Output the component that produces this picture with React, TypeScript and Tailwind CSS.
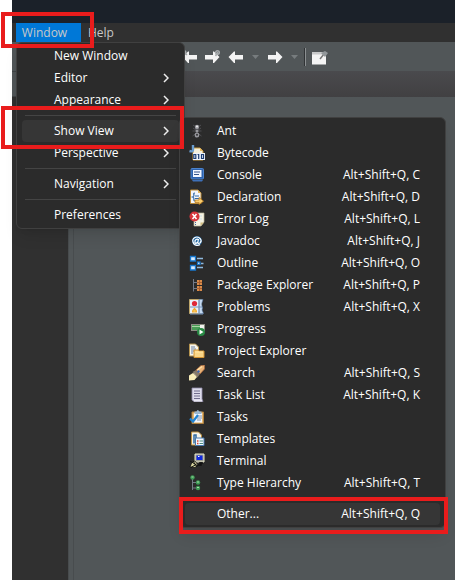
import React from "react";

type Item = { name: string; key?: string; icon?: React.ReactNode };

const W = "#f4f4f4";

function Icon({ children }: { children: React.ReactNode }) {
  return (
    <svg viewBox="0 0 16 16" className="h-4 w-4 shrink-0" aria-hidden="true">
      {children}
    </svg>
  );
}

const ant = (
  <Icon>
    <path d="M4 2l3 2M12 2L9 4M3.500 8h9M4 5l3 2M12 5L9 7M3.500 13l4-3M12.500 13l-4-3" stroke="#57575c" strokeWidth=".8" fill="none" />
    <circle cx="8" cy="4" r="2.200" fill="#97979d" />
    <circle cx="8" cy="8" r="1.700" fill="#77777d" />
    <ellipse cx="8" cy="12" rx="2.300" ry="2.600" fill="#97979d" />
    <circle cx="8" cy="3.600" r="1" fill="#efefef" />
    <circle cx="8" cy="8" r=".7" fill="#c9c9c9" />
    <circle cx="8" cy="11.800" r="1.100" fill="#3a3a3c" />
  </Icon>
);
const bytecode = (
  <Icon>
    <path d="M4 3h7l3 3v9H4z" fill="#f5f0dc" stroke="#c5973d" />
    <path d="M11 3v3h3" fill="#e5b964" />
    <path d="M4 0v5q0 2-3.500 1" stroke="#6a9dd0" strokeWidth="2.400" fill="none" />
    <path d="M4 8h12v7H4z" fill="#eef3fb" />
    <path d="M4.800 9.500h2v4h-2zM8.500 9.500h1.200v4.500M12.500 9.500h2v4h-2z" stroke="#1d3d73" strokeWidth="1.200" fill="none" />
  </Icon>
);
const consoleIcon = (
  <Icon>
    <rect x="2" y="1.500" width="12.500" height="10.500" rx="1" fill="#2d62ad" stroke="#4c83cc" />
    <rect x="4" y="3" width="8.500" height="7" fill="#f3f7ff" />
    <path d="M5 5h6M5 7.500h5" stroke="#35558b" />
    <path d="M3 13h11l-1 1.500H4z" fill="#3e70b8" />
  </Icon>
);
const declaration = (
  <Icon>
    <path d="M1.500 1h7.500l3 3v10.500H1.500z" fill="#f3f6fb" stroke="#b98a38" />
    <path d="M9 1v3h3" fill="#e0b664" />
    <path d="M6 4q-2 0-1 2 0 1.500-1.500 2Q5 8.500 5 10q-.5 2 1 2M6 7h4M6 9.500h4" stroke="#326aa6" strokeWidth="1.200" fill="none" />
    <path d="M6 11h4V8.500l4.500 3.700L10 15.500v-2H6z" fill="#f8cd70" stroke="#b87b20" strokeWidth=".8" />
  </Icon>
);
const errorLog = (
  <Icon>
    <path d="M5 2h10v9l-3 4H5V6z" fill="#f5f3e3" stroke="#b9b49a" strokeWidth=".7" />
    <path d="M11.500 15v-3.500h3.500" fill="#cfbb80" />
    <path d="M6 11.500h1M6 13.500h1" stroke="#4469a3" />
    <path d="M9 5h4M9 8h4" stroke="#cbdce9" />
    <circle cx="5.500" cy="5.500" r="5" fill="#d5363c" />
    <path d="M3.500 3l4 5M7.500 3l-4 5" stroke="#fff" strokeWidth="1.500" />
  </Icon>
);
const javadoc = (
  <Icon>
    <circle cx="8" cy="8" r="5" fill="#2467a0" />
    <path d="M9.500 6L8.800 9.500Q9 11 11 10q2-2 .5-4Q9 3 6 4.500T4 9t3 3.200q2 .5 4-.6M9.300 7Q8.500 5.500 7 6.500T6 9.500t3-.5" stroke="#fff" strokeWidth="1.200" fill="none" />
  </Icon>
);
const outline = (
  <Icon>
    <path d="M1.500 1.500h5V6h-5zM1.500 10.500h5V15h-5z" fill="#d6ebff" stroke="#1676cc" strokeWidth="1.300" />
    <path d="M8 3.500h6M8 12.500h6M12 8.500h2.500" stroke="#8fb9dd" strokeWidth="1.500" />
    <rect x="8.500" y="7" width="2.500" height="2.500" fill="#fff" stroke="#1676cc" strokeWidth="1.300" />
  </Icon>
);
const packageExplorer = (
  <Icon>
    <path d="M4.500 2v12.500M4.500 5.500H8M4.500 11.500H8" stroke="#737b89" fill="none" />
    <path d="M8 3h5v5H8zM8 9h5v5H8z" fill="#a75e2e" />
    <path d="M8 3h2v2H8zM11 3h2v2h-2zM8 6h2v2H8zM11 6h2v2h-2zM8 9h2v2H8zM11 9h2v2h-2zM8 12h2v2H8zM11 12h2v2h-2z" fill="#d98b4a" />
  </Icon>
);
const problems = (
  <Icon>
    <path d="M.500 .500h12v14H.500z" fill="#e9f1fb" stroke="#bda56a" />
    <path d="M10 .500h4L12.500 5l1 4-.5 2 1.500 3.500H10z" fill="#c5d9f0" stroke="#5b7da9" strokeWidth=".6" />
    <path d="M1 8h12M10 1v14M1 15h13" stroke="#7895ba" />
    <circle cx="5.500" cy="4.500" r="2.600" fill="#df2939" />
    <path d="M3 13.500v-2l2.500-3 2.500 3v2z" fill="#f2aa31" />
    <path d="M4.500 12h2" stroke="#ffe178" />
  </Icon>
);
const progress = (
  <Icon>
    <rect x="2.500" y="3.500" width="13" height="6" fill="#f1f3ee" stroke="#8c8b83" />
    <rect x="3" y="4" width="8" height="5" fill="#4a9c57" />
    <path d="M3 5.500h8" stroke="#a8d8a4" />
    <circle cx="12" cy="11" r="4" fill="#278943" />
    <path d="M10.500 8.500l4 2.500-4 2.500z" fill="#fff" />
  </Icon>
);
const project = (
  <Icon>
    <path d="M.500 1h6l3 3v9h-9z" fill="#f7f5ec" stroke="#b69550" />
    <path d="M2 4h4M2 6h5M2 8h3M2 10h2" stroke="#6680a4" />
    <path d="M5 7h4l1 1h5v6.500H5z" fill="#f8d486" stroke="#d29233" />
    <path d="M6 9h8" stroke="#ffe7a5" />
  </Icon>
);
const search = (
  <Icon>
    <path d="M0 10.500L4 8l4 4-2.500 3L0 15.500z" fill="#f8edb9" />
    <path d="M3.500 7L7 5l4 4-2.500 3.500z" fill="#85796a" />
    <path d="M7 5l5-4.500 3.500-.500v4L11 9z" fill="#e9b276" stroke="#a8683f" strokeWidth=".8" />
    <path d="M8.500 5L13 1.500" stroke="#ffe2a6" strokeWidth="1.500" />
    <path d="M4.500 8l3 3.500" stroke="#c5bba2" />
    <circle cx="9.500" cy="6.500" r="1.200" fill="#3669bb" />
  </Icon>
);
const taskList = (
  <Icon>
    <path d="M3 1h10v11l1 2.500H5L3 13z" fill="#dedcec" stroke="#918ca9" strokeWidth=".8" />
    <path d="M5 4h6M5 6.500h6M5 9h6M5 11.500h6" stroke="#716d8d" />
    <path d="M5 14h8" stroke="#f5f4fb" />
  </Icon>
);
const tasks = (
  <Icon>
    <path d="M3 3h11.500v11.500H3z" fill="#e3b66f" stroke="#ad7f3e" />
    <path d="M5 4h8v9.500H5z" fill="#eef5ff" />
    <path d="M5.500 5V2.500h2q1-3 3 0h2V5z" fill="#9bb7d0" />
    <path d="M9 7h4M8 9h5M8 11h4" stroke="#8496b0" />
    <path d="M1 9.500l3 3 5-6.500" stroke="#2184d3" strokeWidth="2.200" fill="none" />
  </Icon>
);
const templates = (
  <Icon>
    <path d="M2.500 1h7l3 3v10h-10z" fill="#f5f3e9" stroke="#bd9142" />
    <path d="M5 3.500v9M5 4h2v3" stroke="#326ba0" strokeWidth="1.500" fill="none" />
    <path d="M6.500 7h8.500v7.500H6.500z" fill="#f3f8ff" stroke="#4679ae" />
    <path d="M8 10h1.500M8 12.500h1.500" stroke="#d44134" strokeWidth="1.300" />
    <path d="M10.500 10H14M10.500 12.500H14" stroke="#4d8f82" />
  </Icon>
);
const terminal = (
  <Icon>
    <path d="M6 1h9v8H6z" fill="#9c9c94" stroke="#e9e9cb" />
    <path d="M7.500 2.500h6v4.500h-6z" fill="#1029df" />
    <path d="M9 3.500h1.500" stroke="#fff" />
    <path d="M10 10h4M12 9v3H9" stroke="#111" strokeWidth="1.500" fill="none" />
    <path d="M1 14l2-5 3-1 3 4-3 2.500z" fill="#d8d69e" stroke="#111" strokeWidth=".8" />
    <path d="M1 8l8 5M4 8l4 6M2 14.500l5-3" stroke="#111" />
  </Icon>
);
const hierarchy = (
  <Icon>
    <path d="M3.500 4v11M3.500 7.500H8M3.500 13H8" stroke="#747b87" fill="none" />
    <g fill="#3d9a55">
      <circle cx="3.500" cy="2.500" r="2.200" />
      <circle cx="9" cy="7.500" r="2.200" />
      <circle cx="9" cy="13" r="2.200" />
    </g>
    <path d="M2.500 2h2M8 7h2M8 12.500h2" stroke="#a8dba7" />
  </Icon>
);

const views: Item[] = [
  { name: "Ant", icon: ant },
  { name: "Bytecode", icon: bytecode },
  { name: "Console", key: "C", icon: consoleIcon },
  { name: "Declaration", key: "D", icon: declaration },
  { name: "Error Log", key: "L", icon: errorLog },
  { name: "Javadoc", key: "J", icon: javadoc },
  { name: "Outline", key: "O", icon: outline },
  { name: "Package Explorer", key: "P", icon: packageExplorer },
  { name: "Problems", key: "X", icon: problems },
  { name: "Progress", icon: progress },
  { name: "Project Explorer", icon: project },
  { name: "Search", key: "S", icon: search },
  { name: "Task List", key: "K", icon: taskList },
  { name: "Tasks", icon: tasks },
  { name: "Templates", icon: templates },
  { name: "Terminal", icon: terminal },
  { name: "Type Hierarchy", key: "T", icon: hierarchy },
];

function Separator() {
  return <div role="separator" className="mx-[3px] my-1 h-px bg-[#444444]" />;
}

function MenuRow({ name, sub, active }: { name: string; sub?: boolean; active?: boolean }) {
  return (
    <button
      role="menuitem"
      className={`flex h-[22px] w-full items-center justify-between rounded pr-2.5 pl-8 text-left ${active ? "bg-[#363636]" : ""}`}
    >
      <span>{name}</span>
      {sub && (
        <svg viewBox="0 0 6 10" className="h-2.5 w-1.5" fill="none" stroke="#eeeeee" strokeWidth="1.5" aria-hidden="true">
          <path d="M1 1l4 4-4 4" />
        </svg>
      )}
    </button>
  );
}

function ViewRow({ name, keyName, icon, active }: { name: string; keyName?: string; icon?: React.ReactNode; active?: boolean }) {
  return (
    <button
      role="menuitem"
      className={`flex h-[22px] w-full items-center rounded pr-5 pl-1 text-left ${active ? "bg-[#363636]" : ""}`}
    >
      <span className="mr-3 flex h-4 w-4 shrink-0">{icon}</span>
      <span>{name}</span>
      {keyName && <span className="ml-auto">Alt+Shift+Q, {keyName}</span>}
    </button>
  );
}

function Arrow({ back, pin, label }: { back?: boolean; pin?: boolean; label: string }) {
  return (
    <button aria-label={label} className="h-4 w-4">
      <svg viewBox="0 0 16 16" className="h-4 w-4" aria-hidden="true">
        <g transform={back ? "matrix(-1 0 0 1 16 0)" : undefined}>
          <path d="M1 6h8V2.500h1l5.500 5.500-5.500 6H9v-3.500H1z" fill={W} />
        </g>
        {pin && (
          <g fill="none" stroke="#a7abad" strokeWidth="1.500">
            <path d={back ? "M1 2l4 4" : "M11.500 7l2.500-4"} />
            <circle cx={back ? 2 : 13.5} cy="3.500" r="1.800" />
          </g>
        )}
      </svg>
    </button>
  );
}

function Caret({ label }: { label: string }) {
  return (
    <button aria-label={label} className="h-4 w-[7px]">
      <svg viewBox="0 0 7 16" className="h-4 w-[7px]" aria-hidden="true">
        <path d="M0 6h7l-3.500 4z" fill="#777c7e" />
      </svg>
    </button>
  );
}

function Callout({ place }: { place: string }) {
  return <div className={`pointer-events-none absolute z-30 border-4 border-[#e91c1c] ${place}`} />;
}

export default function App() {
  return (
    <div className="relative flex min-h-screen flex-col overflow-hidden bg-white pl-3 font-['Open_Sans','Noto_Sans',sans-serif] text-xs text-white">
      <header className="h-[23px] bg-[#1b2129]" />
      <nav aria-label="Main menu" className="flex h-[19px] bg-[#303030] pl-1 text-[#c8c8c8]">
        <button aria-expanded="true" className="w-[65px] bg-[#0078d7] pr-2 text-center">Window</button>
        <button className="px-[7px]">Help</button>
      </nav>
      <div className="flex h-[29px] items-center gap-2 bg-[#515658] pl-[170px]">
        <div className="flex gap-1.5">
          <Arrow back pin label="Previous edit location" />
          <Arrow pin label="Next edit location" />
        </div>
        <Arrow back label="Back" />
        <Caret label="Back history" />
        <Arrow label="Forward" />
        <div className="flex items-center gap-1.5">
          <Caret label="Forward history" />
          <span className="h-[18px] w-[2px] border-l border-[#303335] bg-[#8b8f91]" />
          <button aria-label="Pin editor" className="h-4 w-4">
            <svg viewBox="0 0 16 16" className="h-4 w-4" aria-hidden="true">
              <path d="M0 3h14v12.500H0z" fill={W} />
              <path d="M0 3h14v2.500H0z" fill="#c8c9ca" />
              <path d="M8 10l4-5" stroke="#777" strokeWidth="1.500" />
              <path d="M9 4l4 4 3-4-3-2z" fill="#92979a" />
            </svg>
          </button>
        </div>
      </div>
      <div className="flex h-[26px] bg-linear-to-b from-[#4a4a4d] to-[#414042]">
        <div className="w-14 border-y border-[#404446] bg-[#515658]" />
      </div>
      <main className="flex flex-1">
        <aside className="w-14 bg-[#303030]" />
        <div className="w-[6px] border-x border-[#484c4e] bg-[#515658]" />
        <section className="flex-1 bg-[#515658]" />
      </main>

      <div role="menu" aria-label="Window" className="absolute top-[42px] left-4 z-10 w-[169px] rounded-md border border-[#404040] bg-[#2b2b2b] px-[5px] py-0.5 shadow-lg">
        <MenuRow name="New Window" />
        <MenuRow name="Editor" sub />
        <MenuRow name="Appearance" sub />
        <Separator />
        <MenuRow name="Show View" sub active />
        <MenuRow name="Perspective" sub />
        <Separator />
        <MenuRow name="Navigation" sub />
        <Separator />
        <MenuRow name="Preferences" />
      </div>

      <div role="menu" aria-label="Show View" className="absolute top-[117px] left-[179px] z-20 w-[267px] rounded-md border border-[#404040] bg-[#2b2b2b] px-[5px] py-0.5 shadow-lg">
        {views.map((v) => (
          <ViewRow key={v.name} name={v.name} keyName={v.key} icon={v.icon} />
        ))}
        <Separator />
        <ViewRow name="Other..." keyName="Q" active />
      </div>

      <Callout place="top-3 left-px h-9 w-[93px]" />
      <Callout place="top-[106px] left-px h-[43px] w-[183px]" />
      <Callout place="top-[497px] left-[179px] h-[37px] w-[269px]" />
    </div>
  );
}
